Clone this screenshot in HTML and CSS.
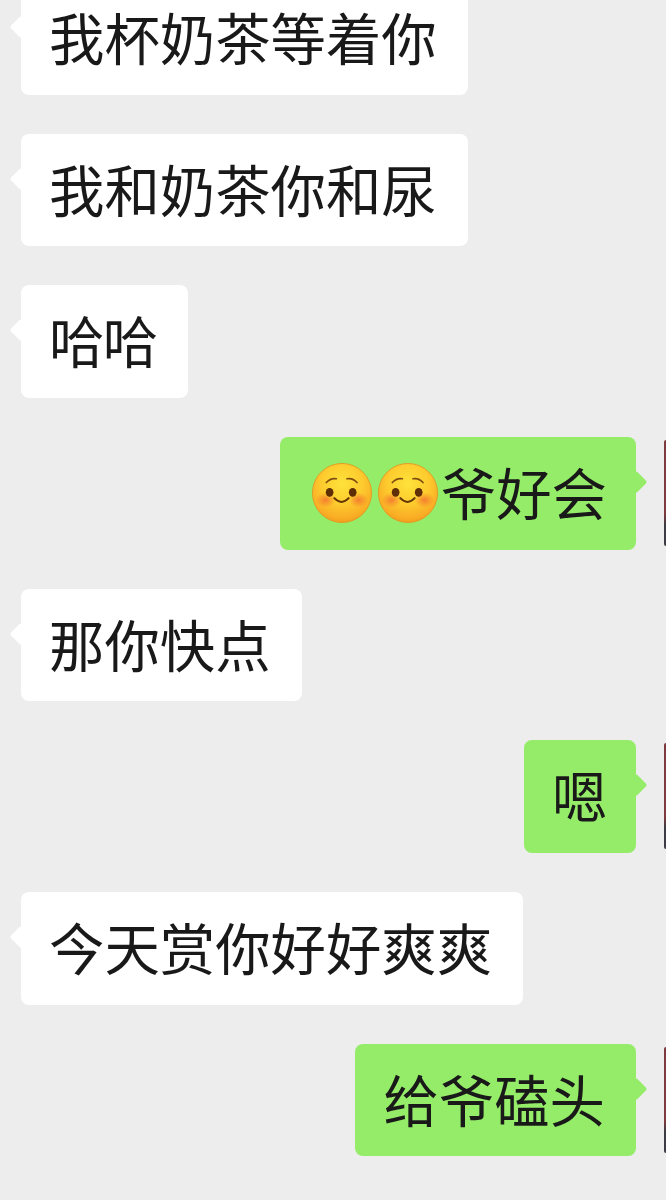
FILE: index.html
```html
<!DOCTYPE html>
<html lang="zh">
<head>
<meta charset="utf-8">
<title>聊天</title>
<link rel="stylesheet" href="styles.css">
</head>
<body>
<main class="chat">
  <div class="row"><div class="bubble in"><span>我杯奶茶等着你</span></div></div>
  <div class="row"><div class="bubble in"><span>我和奶茶你和尿</span></div></div>
  <div class="row"><div class="bubble in tight"><span>哈哈</span></div></div>
  <div class="row out">
    <div class="bubble mine with-emoji">
      <svg class="emoji" viewBox="0 0 64 64"><use href="#blush"/></svg><svg class="emoji" viewBox="0 0 64 64"><use href="#blush"/></svg><span>爷好会</span>
    </div>
    <div class="avatar"></div>
  </div>
  <div class="row"><div class="bubble in"><span>那你快点</span></div></div>
  <div class="row out"><div class="bubble mine single"><span>嗯</span></div><div class="avatar"></div></div>
  <div class="row"><div class="bubble in"><span>今天赏你好好爽爽</span></div></div>
  <div class="row out"><div class="bubble mine"><span>给爷磕头</span></div><div class="avatar"></div></div>
</main>
<svg class="defs" width="0" height="0" aria-hidden="true">
  <defs>
    <radialGradient id="face" cx="50%" cy="34%" r="70%">
      <stop offset="0" stop-color="#fee23a"/>
      <stop offset="0.5" stop-color="#fdcb2e"/>
      <stop offset="0.85" stop-color="#f9ab24"/>
      <stop offset="1" stop-color="#ec961a"/>
    </radialGradient>
    <radialGradient id="cheek">
      <stop offset="0" stop-color="#f2692f" stop-opacity=".75"/>
      <stop offset="1" stop-color="#f2692f" stop-opacity="0"/>
    </radialGradient>
    <g id="blush">
      <circle cx="32" cy="32" r="31.5" fill="url(#face)" stroke="#e29a20" stroke-width="1"/>
      <ellipse cx="14.500" cy="39.500" rx="10.500" ry="8" fill="url(#cheek)"/>
      <ellipse cx="49.500" cy="39.500" rx="10.500" ry="8" fill="url(#cheek)"/>
      <ellipse cx="18.800" cy="31.300" rx="4.100" ry="4.700" fill="#5f2e06"/>
      <ellipse cx="43.400" cy="31.300" rx="4.100" ry="4.700" fill="#5f2e06"/>
      <path d="M15.300 20.800Q20 15.600 26 16.800M48 20.800Q43.500 15.600 37.300 16.800" fill="none" stroke="#7f4e10" stroke-width="1.800" stroke-linecap="round"/>
      <path d="M23.800 37.500Q31.500 45.500 39.100 37.500" fill="none" stroke="#643506" stroke-width="2.200" stroke-linecap="round"/>
    </g>
  </defs>
</svg>
</body>
</html>
```
FILE: styles.css
```css
html, body {
  margin: 0;
  padding: 0;
  height: 1200px;
  overflow: hidden;
  background: #ededed;
}
.chat {
  display: flex;
  flex-direction: column;
  gap: 39.2px;
  margin-top: -18px;
  padding-left: 21px;
  font-family: "Noto Sans CJK SC", "Liberation Sans", sans-serif;
}
.row {
  display: flex;
  justify-content: flex-start;
  height: 112.5px;
}
.row.out {
  justify-content: flex-end;
  gap: 28px;
}
.bubble {
  position: relative;
  display: flex;
  align-items: center;
  padding: 0 31px 3px 28px;
  border-radius: 8px;
  font-size: 55.4px;
  line-height: 1;
  color: #191919;
}
.bubble::before {
  content: "";
  position: absolute;
  top: 37px;
  width: 16px;
  height: 16px;
  border-radius: 2px;
  transform: rotate(45deg);
  background: inherit;
}
.in { background: #fff; }
.in::before { left: -8px; }
.mine { background: #95ec69; }
.mine::before { right: -8px; }
.tight { letter-spacing: -1.6px; }
.single { padding: 0 28.500px 3px 28px; }
.with-emoji { padding: 0 29px 3px 32px; }
.emoji {
  width: 60px;
  height: 60px;
  flex: none;
  margin: 3px 3px 0 0;
}
.emoji:first-child { margin-right: 6px; }
.avatar {
  width: 2px;
  height: 106px;
  margin-top: 3px;
  border-radius: 3px 0 0 3px;
  background: linear-gradient(#7d3b3d 0 70%, #3c3c44 80%);
}
.defs {
  position: absolute;
}
```
